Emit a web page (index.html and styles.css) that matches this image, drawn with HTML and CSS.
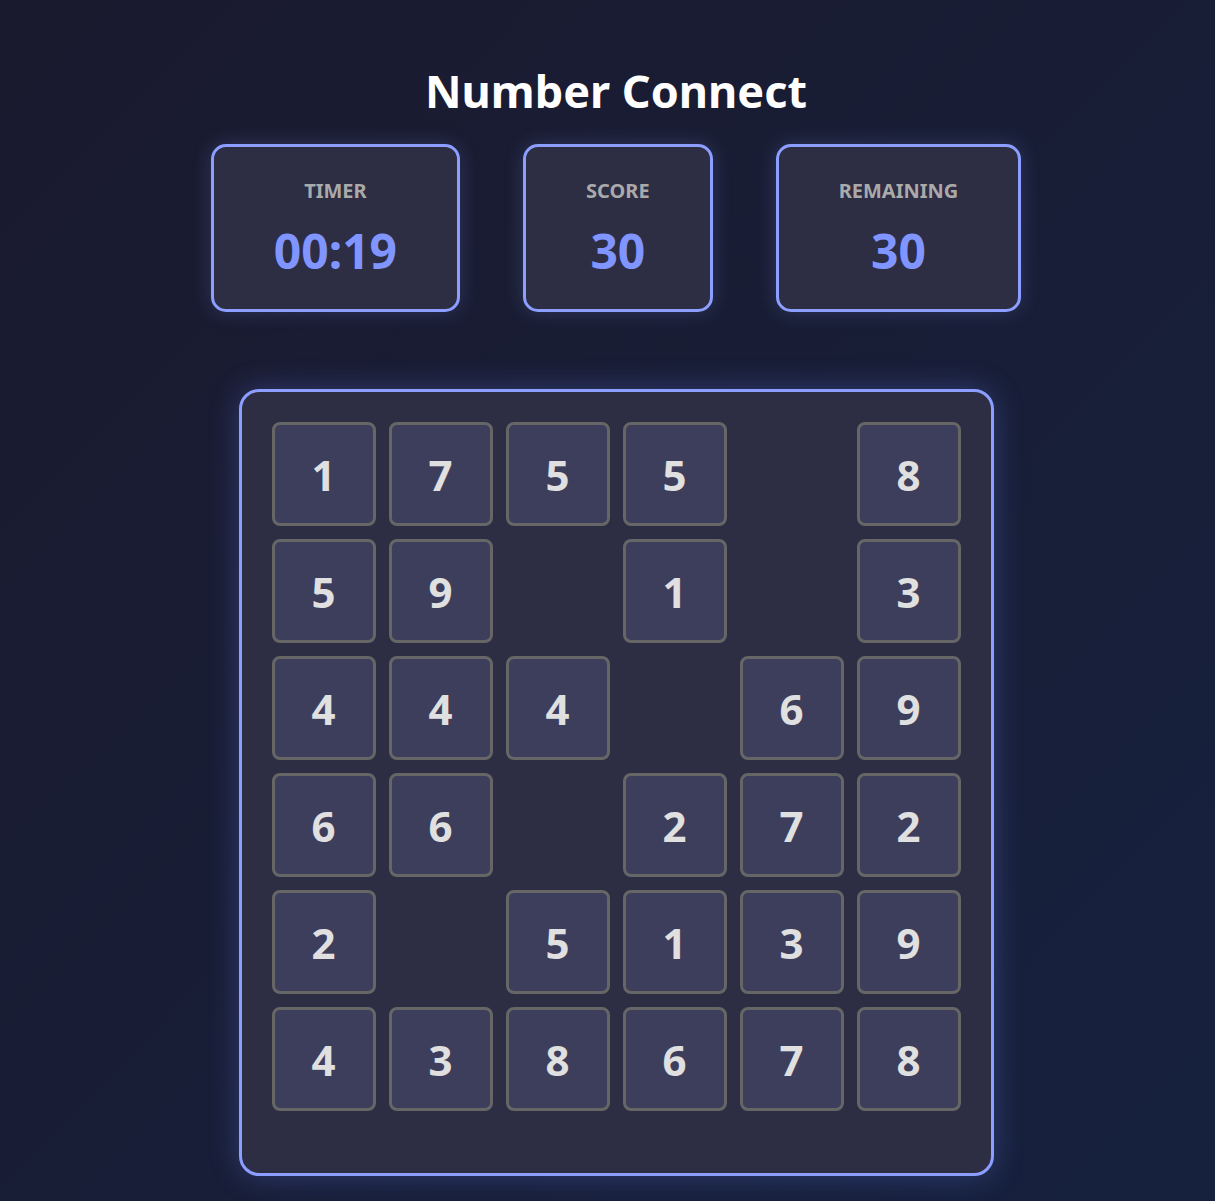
FILE: index.html
```html
<!DOCTYPE html>
<html lang="en">

<head>
    <meta charset="UTF-8">
    <meta name="viewport" content="width=device-width, initial-scale=1.0">
    <title>Number Connect</title>
    <link rel="stylesheet" href="styles.css">
</head>

<body>
    <div class="game">
        <h1 class="game-title">Number Connect</h1>
        <div class="stats">
            <div class="stat-card">
                <p class="stat-label">TIMER</p>
                <p class="stat-value">00:19</p>
            </div>
            <div class="stat-card">
                <p class="stat-label">SCORE</p>
                <p class="stat-value">30</p>
            </div>
            <div class="stat-card">
                <p class="stat-label">REMAINING</p>
                <p class="stat-value">30</p>
            </div>
        </div>
        <div class="board">
            <div class="cell">1</div>
            <div class="cell">7</div>
            <div class="cell">5</div>
            <div class="cell">5</div>
            <div class="cell empty"></div>
            <div class="cell">8</div>

            <div class="cell">5</div>
            <div class="cell">9</div>
            <div class="cell empty"></div>
            <div class="cell">1</div>
            <div class="cell empty"></div>
            <div class="cell">3</div>

            <div class="cell">4</div>
            <div class="cell">4</div>
            <div class="cell">4</div>
            <div class="cell empty"></div>
            <div class="cell">6</div>
            <div class="cell">9</div>

            <div class="cell">6</div>
            <div class="cell">6</div>
            <div class="cell empty"></div>
            <div class="cell">2</div>
            <div class="cell">7</div>
            <div class="cell">2</div>

            <div class="cell">2</div>
            <div class="cell empty"></div>
            <div class="cell">5</div>
            <div class="cell">1</div>
            <div class="cell">3</div>
            <div class="cell">9</div>

            <div class="cell">4</div>
            <div class="cell">3</div>
            <div class="cell">8</div>
            <div class="cell">6</div>
            <div class="cell">7</div>
            <div class="cell">8</div>
        </div>
    </div>
</body>

</html>
```

FILE: styles.css
```css
*,
*::before,
*::after {
    box-sizing: border-box;
}

p {
    margin: 0;
}

html,
body {
    margin: 0;
    min-height: 100%;
}

body {
    background: linear-gradient(135deg, #1a1a2e 0%, #16213e 100%);
    font-family: 'Noto Sans', 'Open Sans', sans-serif;
    color: #fff;
    min-height: 1201px;
}

.game {
    display: flex;
    flex-direction: column;
    align-items: center;
    padding: 61px 0 0 17px;
}

.game-title {
    margin: 0 0 23px;
    font-size: 45px;
    line-height: 60px;
    font-weight: 700;
    color: #fff;
}

.stats {
    display: flex;
    gap: 63px;
    margin-bottom: 77px;
}

.stat-card {
    display: flex;
    flex-direction: column;
    align-items: center;
    padding: 32px 60px 31px;
    background-color: #2d2d44;
    border: 3px solid #8c9eff;
    border-radius: 15px;
    box-shadow: 0 0 20px rgba(140, 158, 255, 0.2);
}

.stat-label {
    font-size: 20px;
    line-height: 24px;
    font-weight: 700;
    color: #aaa;
    margin-bottom: 21px;
}

.stat-value {
    font-size: 48px;
    line-height: 54px;
    font-weight: 700;
    color: #8095ff;
}

.board {
    display: grid;
    grid-template-columns: repeat(6, 104px);
    grid-auto-rows: 104px;
    gap: 13px;
    padding: 30px 30px 62px;
    background-color: #2d2d44;
    border: 3px solid #8c9eff;
    border-radius: 20px;
    box-shadow: 0 0 30px rgba(110, 130, 255, 0.3);
}

.cell {
    display: flex;
    align-items: center;
    justify-content: center;
    background-color: #3d3d5c;
    border: 3px solid #666;
    border-radius: 8px;
    font-size: 42px;
    font-weight: 700;
    color: #e0e0e0;
}

.cell.empty {
    background: none;
    border-color: transparent;
}
```
